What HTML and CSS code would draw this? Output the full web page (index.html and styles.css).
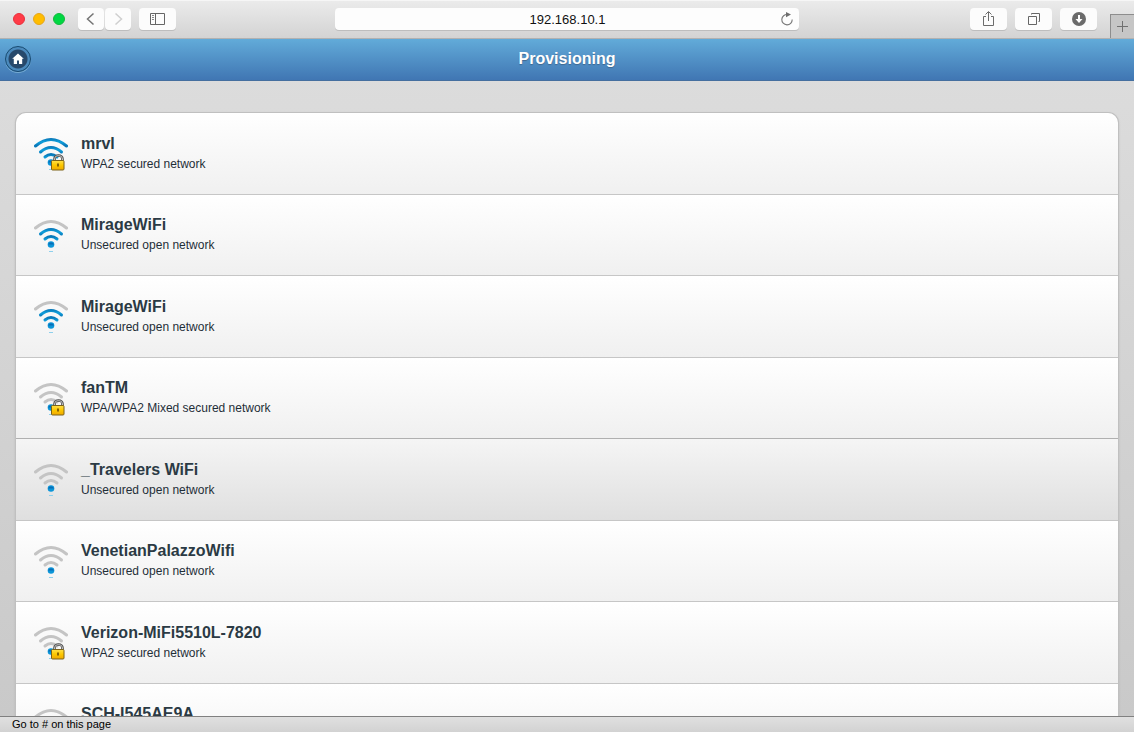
FILE: index.html
```html
<!DOCTYPE html>
<html lang="en">
<head>
<meta charset="utf-8">
<title>Provisioning</title>
<link rel="stylesheet" href="styles.css">
</head>
<body>
<svg class="defs" aria-hidden="true">
  <defs>
    <linearGradient id="blue" gradientUnits="userSpaceOnUse" x1="0" y1="2" x2="0" y2="10" spreadMethod="repeat">
      <stop offset="0" stop-color="#0873b4"/><stop offset=".5" stop-color="#10a0dc"/><stop offset="1" stop-color="#0873b4"/>
    </linearGradient>
    <linearGradient id="gold" x1="0" y1="0" x2="0" y2="1">
      <stop offset="0" stop-color="#ffe04a"/><stop offset=".5" stop-color="#fcc800"/><stop offset="1" stop-color="#f0a800"/>
    </linearGradient>
    <symbol id="wifi" viewBox="0 0 36 36">
      <g class="arcs">
        <path class="arc outer" d="M2.500 10Q18-3 33.500 10"/>
        <path class="arc middle" d="M7.500 16Q18 7 28.500 16"/>
        <path class="arc inner" d="M12 21Q18 16 24 21"/>
      </g>
      <circle cx="18" cy="26.500" r="3.300" fill="#0b95d8"/>
      <path d="M15 26.500a3.300 3.300 0 0 1 6 0z" fill="#0a6cb4"/>
      <path d="M16 33.500h4" stroke="#8fd0ec" fill="none"/>
    </symbol>
    <symbol id="lock" viewBox="0 0 36 36">
      <path d="M21.500 25v-2a4 3.500 0 0 1 8 0v2" fill="none" stroke="#4c4c4c" stroke-width="2.600"/>
      <path d="M21.500 25v-2a4 3.500 0 0 1 8 0v2" fill="none" stroke="#c2c2c2" stroke-width="1"/>
      <rect x="18.500" y="24.500" width="12.500" height="9.500" rx="1" fill="url(#gold)" stroke="#7d6318"/>
      <path d="M25 27.500v3" stroke="#6b4a00" stroke-width="1.600"/>
    </symbol>
  </defs>
</svg>

<header class="toolbar">
  <div class="tools">
    <div class="lights"><span class="light red"></span><span class="light amber"></span><span class="light green"></span></div>
    <div class="history">
      <button class="tool narrow" aria-label="Back"><svg width="26" height="22" viewBox="0 0 26 22"><path d="M15.500 5.500L9.500 11l6 5.500" fill="none" stroke="#747474" stroke-width="1.500"/></svg></button>
      <button class="tool narrow" aria-label="Forward"><svg width="26" height="22" viewBox="0 0 26 22"><path d="M10.500 5.500l6 5.500-6 5.500" fill="none" stroke="#cfcfcf" stroke-width="1.500"/></svg></button>
    </div>
    <button class="tool" aria-label="Sidebar"><svg width="37" height="22" viewBox="0 0 37 22"><path d="M11.500 5.500h14v11h-14zM16.500 5.500v11" fill="none" stroke="#666"/><path d="M13 7.500h2M13 9.500h2M13 11.500h2" stroke="#888"/></svg></button>
  </div>
  <div class="address">
    <input class="url" type="text" value="192.168.10.1" aria-label="Address">
    <button class="reload" aria-label="Reload"><svg width="14" height="14" viewBox="0 0 14 14"><path d="M7.500 2.500A5.200 5.200 0 1 0 12.200 7.500" fill="none" stroke="#777" stroke-width="1.100"/><path d="M6 0l5 2.600L6 5.200z" fill="#6e6e6e"/></svg></button>
  </div>
  <div class="tools end">
    <button class="tool" aria-label="Share"><svg width="37" height="22" viewBox="0 0 37 22"><path d="M16 8.500h-2.500v9h10v-9H21M18.500 13V4M15.500 6.500l3-3 3 3" fill="none" stroke="#6c6c6c"/></svg></button>
    <button class="tool" aria-label="Tabs"><svg width="37" height="22" viewBox="0 0 37 22"><path d="M13.500 8.500h8v8h-8zM16.500 6.500v-1h8v8h-1" fill="none" stroke="#666"/></svg></button>
    <button class="tool" aria-label="Downloads"><svg width="37" height="22" viewBox="0 0 37 22"><circle cx="19" cy="11" r="7" fill="#6b6b6b"/><path d="M18 7h2v4h2.500L19 15l-3.500-4H18z" fill="#fff"/></svg></button>
    <button class="new-tab" aria-label="New tab"><svg width="23" height="23" viewBox="0 0 23 23"><path d="M11.500 6v11M6 11.500h11" stroke="#707070"/></svg></button>
  </div>
</header>

<main class="page">
  <div class="titlebar">
    <a class="home" href="#" aria-label="Home"><svg width="18" height="18" viewBox="0 0 18 18"><path d="M9 3.500l5.800 5.300h-1.600V14H10v-3.500H8V14H4.800V8.800H3.200z" fill="#fff"/></svg></a>
    <h1 class="title">Provisioning</h1>
  </div>
  <div class="content">
    <ul class="networks">
      <li class="item"><a class="network full" href="#"><svg class="signal"><use href="#wifi"/><use href="#lock"/></svg><span class="text"><strong class="name">mrvl</strong><span class="security">WPA2 secured network</span></span></a></li>
      <li class="item"><a class="network good" href="#"><svg class="signal"><use href="#wifi"/></svg><span class="text"><strong class="name">MirageWiFi</strong><span class="security">Unsecured open network</span></span></a></li>
      <li class="item"><a class="network good" href="#"><svg class="signal"><use href="#wifi"/></svg><span class="text"><strong class="name">MirageWiFi</strong><span class="security">Unsecured open network</span></span></a></li>
      <li class="item"><a class="network" href="#"><svg class="signal"><use href="#wifi"/><use href="#lock"/></svg><span class="text"><strong class="name">fanTM</strong><span class="security">WPA/WPA2 Mixed secured network</span></span></a></li>
      <li class="item"><a class="network active" href="#"><svg class="signal"><use href="#wifi"/></svg><span class="text"><strong class="name">_Travelers WiFi</strong><span class="security">Unsecured open network</span></span></a></li>
      <li class="item"><a class="network" href="#"><svg class="signal"><use href="#wifi"/></svg><span class="text"><strong class="name">VenetianPalazzoWifi</strong><span class="security">Unsecured open network</span></span></a></li>
      <li class="item"><a class="network" href="#"><svg class="signal"><use href="#wifi"/><use href="#lock"/></svg><span class="text"><strong class="name">Verizon-MiFi5510L-7820</strong><span class="security">WPA2 secured network</span></span></a></li>
      <li class="item"><a class="network" href="#"><svg class="signal"><use href="#wifi"/></svg><span class="text"><strong class="name">SCH-I545AE9A</strong></span></a></li>
    </ul>
  </div>
</main>
<footer class="status">Go to # on this page</footer>
</body>
</html>
```
FILE: styles.css
```css
* { box-sizing: border-box; }

body {
  display: flex;
  flex-direction: column;
  height: 100vh;
  margin: 0;
  overflow: hidden;
  color: #2b3a44;
  font-family: "Liberation Sans", Arial, sans-serif;
}

button { padding: 0; border: 0; background: none; }
svg { display: block; }
.defs { position: absolute; width: 0; height: 0; }

/* Browser toolbar */
.toolbar {
  display: grid;
  grid-template-columns: 1fr 41% 1fr;
  flex: none;
  height: 39px;
  border-top: 1px solid #f6f6f6;
  border-bottom: 1px solid #b1b1b1;
  background: linear-gradient(#ebebeb, #d3d3d3);
}
.tools { display: flex; gap: 8px; padding: 7px 0 0 13px; }
.tools.end { justify-content: flex-end; padding-left: 0; }
.lights { display: flex; gap: 8px; padding-top: 5px; margin-right: 5px; }
.light { width: 12px; height: 12px; border: 1px solid; border-radius: 50%; }
.red { background: #ff3b47; border-color: #e8303c; }
.amber { background: #ffbd00; border-color: #e6a51a; }
.green { background: #00d742; border-color: #12b83c; }
.history { display: flex; gap: 1px; }
.tool {
  width: 37px;
  height: 22px;
  border-radius: 4px;
  background: #fcfcfc;
  box-shadow: 0 1px 0 #bdbdbd;
}
.narrow { width: 26px; }
.address {
  display: flex;
  align-items: center;
  height: 22px;
  margin-top: 7px;
  padding-right: 5px;
  border-radius: 4px;
  background: #fdfdfd;
  box-shadow: 0 1px 0 #bdbdbd;
}
.url {
  flex: 1;
  min-width: 0;
  padding: 0 0 0 20px;
  border: 0;
  outline: 0;
  background: none;
  color: #111;
  font: 13px "Liberation Sans", Arial, sans-serif;
  text-align: center;
}
.new-tab {
  align-self: flex-end;
  width: 24px;
  height: 24px;
  margin-left: 5px;
  border: solid #8d8d8d;
  border-width: 1px 0 0 1px;
  background: #c6c6c6;
}

/* Page */
.page {
  display: flex;
  flex: 1;
  flex-direction: column;
  min-height: 0;
  background: linear-gradient(#dddddd, #c9c9c9);
}
.titlebar {
  display: grid;
  grid-template-columns: 1fr auto 1fr;
  align-items: center;
  flex: none;
  height: 42px;
  padding: 0 5px 2px;
  border-bottom: 1px solid #456f9f;
  background: linear-gradient(#62abd9, #4076b3);
}
.title {
  margin: 0;
  color: #fff;
  font-size: 16px;
  line-height: 20px;
  text-shadow: 0 1px 1px #3e6790;
}
.home {
  display: grid;
  place-items: center;
  width: 26px;
  height: 26px;
  border: 1px solid #174a70;
  border-radius: 50%;
  background: radial-gradient(circle, #27496c 0 9px, #4b8abd 10px);
  box-shadow: 0 1px 0 #76acd3;
}
.content { flex: 1; min-height: 0; padding: 32px 16px 0; overflow: hidden; }
.networks {
  margin: 0;
  padding: 0;
  overflow: hidden;
  list-style: none;
  border-radius: 10px;
  box-shadow: 0 0 0 1px #c0c0c0, 0 1px 3px #a0a0a0;
}
.network {
  display: flex;
  gap: 12px;
  min-height: 81px;
  padding: 0 17px;
  border-bottom: 1px solid #c6c6c6;
  background: linear-gradient(#fff, #f0f0f0);
  color: inherit;
  text-decoration: none;
}
.item:nth-child(odd) .network { min-height: 82px; }
.item:nth-child(odd) .text { padding-top: 21px; }
.network.active { background: linear-gradient(#f5f5f5, #dfdfdf); }
.item:has(+ .item .active) .network { border-color: #b0b0b0; }
.signal { flex: none; width: 36px; height: 36px; margin-top: 23px; }
.text { display: flex; flex-direction: column; padding-top: 20px; }
.name { font-size: 16px; line-height: 20px; }
.security { font-size: 12px; line-height: 20px; color: #1f2e38; }

/* Signal arcs light up with reception */
.arc { fill: none; stroke: var(--arc, #c4c4c4); stroke-width: 3px; stroke-linecap: round; }
.full { --arc: url(#blue); --outer: url(#blue); }
.good { --arc: url(#blue); --outer: #c4c4c4; }
.outer { stroke: var(--outer, #c4c4c4); }

.status {
  flex: none;
  height: 16px;
  padding-left: 12px;
  border-top: 1px solid #808080;
  background: linear-gradient(#e0e0e0, #d2d2d2);
  color: #000;
  font-size: 11px;
  line-height: 15px;
}
```
